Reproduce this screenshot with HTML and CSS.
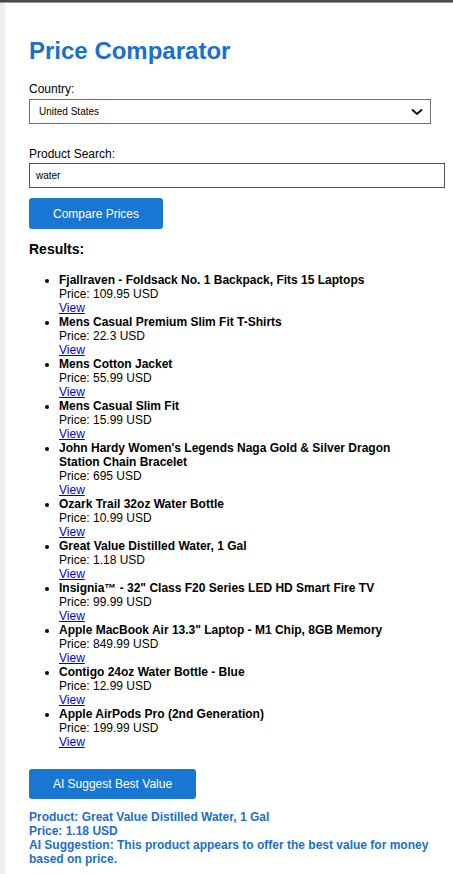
FILE: index.html
```html
<!DOCTYPE html>
<html>
<head>
<meta charset="utf-8">
<link rel="stylesheet" href="styles.css">
</head>
<body>
<div class="topbar"></div>
<div class="page">
  <main class="container">
    <h1 class="title">Price Comparator</h1>
    <label class="label">Country:</label>
    <div class="select">
      <span>United States</span>
      <svg class="chev" width="12" height="8" viewBox="0 0 12 8"><path d="M1 1.5 L6 6 L11 1.5" fill="none" stroke="#111" stroke-width="2"/></svg>
    </div>
    <label class="label label-search">Product Search:</label>
    <div class="input">water</div>
    <button class="btn btn-compare">Compare Prices</button>
    <h2 class="results-title">Results:</h2>
    <ul class="results">
      <li><strong>Fjallraven - Foldsack No. 1 Backpack, Fits 15 Laptops</strong><br>Price: 109.95 USD<br><a href="#">View</a></li>
      <li><strong>Mens Casual Premium Slim Fit T-Shirts</strong><br>Price: 22.3 USD<br><a href="#">View</a></li>
      <li><strong>Mens Cotton Jacket</strong><br>Price: 55.99 USD<br><a href="#">View</a></li>
      <li><strong>Mens Casual Slim Fit</strong><br>Price: 15.99 USD<br><a href="#">View</a></li>
      <li><strong>John Hardy Women's Legends Naga Gold &amp; Silver Dragon Station Chain Bracelet</strong><br>Price: 695 USD<br><a href="#">View</a></li>
      <li><strong>Ozark Trail 32oz Water Bottle</strong><br>Price: 10.99 USD<br><a href="#">View</a></li>
      <li><strong>Great Value Distilled Water, 1 Gal</strong><br>Price: 1.18 USD<br><a href="#">View</a></li>
      <li><strong>Insignia™ - 32" Class F20 Series LED HD Smart Fire TV</strong><br>Price: 99.99 USD<br><a href="#">View</a></li>
      <li><strong>Apple MacBook Air 13.3" Laptop - M1 Chip, 8GB Memory</strong><br>Price: 849.99 USD<br><a href="#">View</a></li>
      <li><strong>Contigo 24oz Water Bottle - Blue</strong><br>Price: 12.99 USD<br><a href="#">View</a></li>
      <li><strong>Apple AirPods Pro (2nd Generation)</strong><br>Price: 199.99 USD<br><a href="#">View</a></li>
    </ul>
    <button class="btn btn-ai">AI Suggest Best Value</button>
    <div class="suggestion">
      <div>Product: Great Value Distilled Water, 1 Gal</div>
      <div>Price: 1.18 USD</div>
      <div>AI Suggestion: This product appears to offer the best value for money based on price.</div>
    </div>
  </main>
</div>
</body>
</html>
```
FILE: styles.css
```css
html, body {
  margin: 0;
  padding: 0;
  overflow: hidden;
}
body {
  background: #efefef;
  font-family: "Liberation Sans", Arial, sans-serif;
  font-size: 12px;
  color: #000;
}
.topbar {
  height: 3px;
  background: #4a4a4a;
  border-bottom: 1px solid #9a9a9a;
  box-sizing: border-box;
}
.page {
  padding-left: 5px;
}
.container {
  background: #fff;
  padding: 34px 0 40px 24px;
  min-height: 900px;
  display: flex;
  flex-direction: column;
  align-items: flex-start;
}
.title {
  margin: 0;
  font-size: 24px;
  line-height: 28px;
  font-weight: bold;
  color: #1a6fcf;
}
.label {
  display: block;
  margin-top: 17px;
  line-height: 14px;
  font-size: 12px;
}
.label-search {
  margin-top: 23px;
}
.select {
  margin-top: 3px;
  box-sizing: border-box;
  width: 402px;
  height: 25px;
  border: 1px solid #6e6e6e;
  display: flex;
  align-items: center;
  justify-content: space-between;
  padding: 0 7px 0 9px;
  font-size: 10px;
}
.chev {
  display: block;
}
.input {
  margin-top: 2px;
  box-sizing: border-box;
  width: 416px;
  height: 25px;
  border: 1px solid #555;
  display: flex;
  align-items: center;
  padding: 0 6px;
  font-size: 10px;
}
.btn {
  border: none;
  border-radius: 3px;
  background: #1976d2;
  color: #fff;
  font-family: "Liberation Sans", Arial, sans-serif;
  font-size: 12px;
  height: 31px;
  padding: 0;
  cursor: pointer;
}
.btn-compare {
  margin-top: 10px;
  width: 134px;
}
.results-title {
  margin: 12px 0 0;
  font-size: 14px;
  line-height: 17px;
  font-weight: bold;
}
.results {
  margin: 15px 0 0;
  padding-left: 30px;
  line-height: 14px;
  width: 371px;
}
.results strong {
  font-weight: bold;
}
.results a {
  color: #0000ee;
}
.btn-ai {
  margin-top: 20px;
  width: 167px;
  height: 30px;
}
.suggestion {
  margin-top: 11px;
  color: #1a6fcf;
  font-weight: bold;
  line-height: 14px;
  width: 401px;
}
```
